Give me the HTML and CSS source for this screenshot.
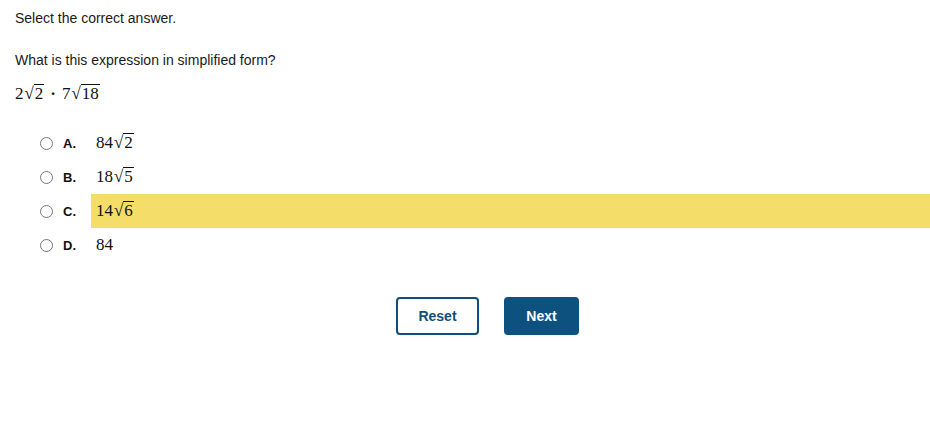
FILE: index.html
```html
<!DOCTYPE html>
<html>
<head>
<meta charset="utf-8">
<link rel="stylesheet" href="styles.css">
</head>
<body>
<div class="page">
  <p class="instr">Select the correct answer.</p>
  <p class="question">What is this expression in simplified form?</p>
  <div class="expr math">2<span class="rad">√</span><span class="radicand">2</span><span class="dot">·</span>7<span class="rad">√</span><span class="radicand">18</span></div>
  <ul class="options">
    <li class="opt"><span class="radio"></span><span class="letter">A.</span><span class="ans math">84<span class="rad">√</span><span class="radicand">2</span></span></li>
    <li class="opt"><span class="radio"></span><span class="letter">B.</span><span class="ans math">18<span class="rad">√</span><span class="radicand">5</span></span></li>
    <li class="opt"><span class="radio"></span><span class="letter">C.</span><span class="ans math hl">14<span class="rad">√</span><span class="radicand">6</span></span></li>
    <li class="opt"><span class="radio"></span><span class="letter">D.</span><span class="ans math">84</span></li>
  </ul>
  <div class="buttons">
    <button class="btn reset">Reset</button>
    <button class="btn next">Next</button>
  </div>
</div>
</body>
</html>
```
FILE: styles.css
```css
html, body { margin: 0; padding: 0; background: #fff; }
body { font-family: "Liberation Sans", Arial, sans-serif; color: #1a1a1a; }
.page { width: 930px; height: 443px; }
p { margin: 0; }
.instr { font-size: 14px; padding: 9px 0 0 15px; line-height: 18px; }
.question { font-size: 14px; padding: 24px 0 0 15px; line-height: 18px; }
.math { font-family: "Liberation Serif", "DejaVu Serif", serif; font-size: 17px; color: #111; }
.expr { padding: 14px 0 0 15px; line-height: 22px; display: flex; align-items: baseline; }
.rad { font-size: 17px; margin-left: 1px; }
.radicand { border-top: 1px solid #111; line-height: 17px; padding: 0 1px; }
.dot { margin: 0 6px; font-weight: bold; }
.options { list-style: none; margin: 21px 0 0 0; padding: 0; }
.opt { display: flex; align-items: center; height: 34px; }
.radio { width: 11px; height: 11px; border: 1px solid #767676; border-radius: 50%; margin-left: 40px; box-sizing: content-box; flex: none; }
.letter { font-weight: bold; font-size: 13px; width: 28px; margin-left: 10px; color: #111; }
.ans { display: flex; align-items: baseline; height: 34px; line-height: 34px; padding-left: 5px; }
.ans .radicand { line-height: 17px; }
.hl { background: #f5dd6a; flex: 1; }
.buttons { display: flex; justify-content: center; gap: 25px; margin-top: 35px; padding-left: 45px; }
.btn { font-family: "Liberation Sans", Arial, sans-serif; font-weight: bold; font-size: 14px; height: 38px; border-radius: 4px; cursor: pointer; }
.reset { width: 83px; background: #fff; color: #0d4f7a; border: 2px solid #0d4f7a; }
.next { width: 75px; background: #0d527f; color: #fff; border: 2px solid #0d527f; }
```
